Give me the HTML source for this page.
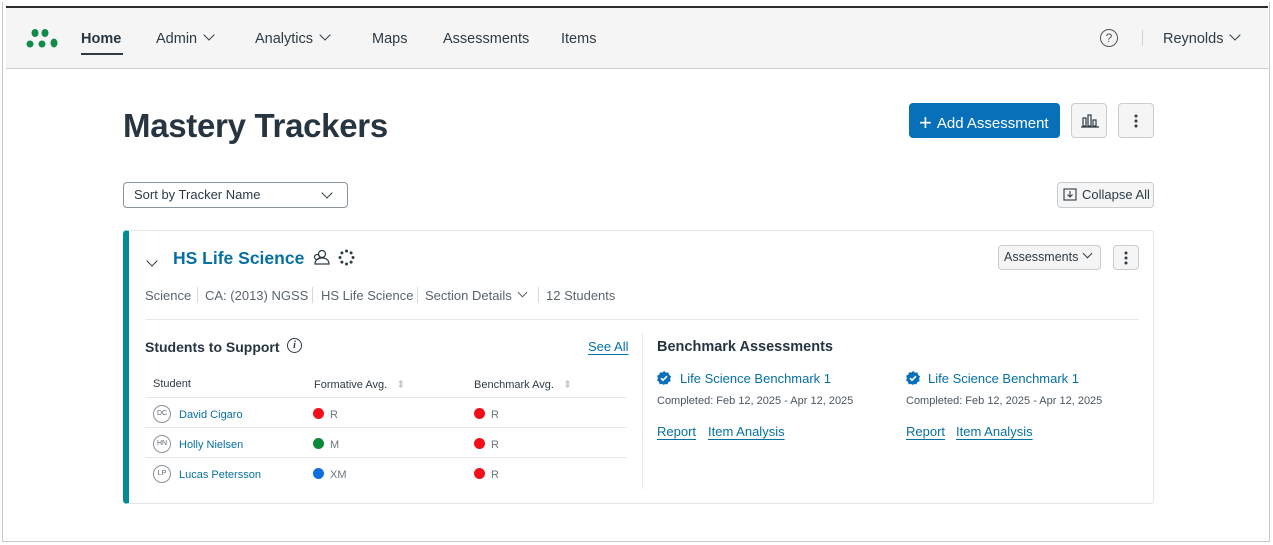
<!DOCTYPE html>
<html><head><meta charset="utf-8"><style>
*{box-sizing:border-box;margin:0;padding:0}
body{width:1273px;height:545px;background:#fff;font-family:"Liberation Sans",sans-serif;color:#273540;position:relative;overflow:hidden}
.frame{position:absolute;left:2px;top:2px;width:1268px;height:540px;border:1px solid #c8c8c8;border-top:none}
.topline{position:absolute;left:6px;top:6px;width:1262px;height:2px;background:#2d2d2d}
.nav{position:absolute;left:6px;top:8px;width:1262px;height:61px;background:#f5f5f5;border-bottom:1px solid #c7cdd1}
.nav span{position:absolute;top:23px;font-size:14.5px;color:#2d3b45}
.abs{position:absolute}
a,.link{color:#0770a3;text-decoration:none}
.chev{display:inline-block;width:8px;height:8px;border-right:1.5px solid #2d3b45;border-bottom:1.5px solid #2d3b45;transform:rotate(45deg);margin-left:8px;position:relative;top:-4px}
.btn{position:absolute;border:1px solid #c7cdd1;background:#f5f5f5;border-radius:4px}
.dots{position:absolute;left:50%;top:50%;transform:translate(-50%,-50%);width:3px}
.dots i{display:block;width:3px;height:3px;border-radius:50%;background:#2d3b45;margin:2px 0}
.meta{position:absolute;top:288px;font-size:13px;color:#5a6470}
.sep{position:absolute;top:287px;width:1px;height:16px;background:#d7dadd}
.th{position:absolute;top:378px;font-size:11px;color:#2d3b45}
.row{position:absolute;left:145px;width:482px;height:1px;background:#e6e8ea}
.av{position:absolute;width:18px;height:18px;border:1px solid #8a949c;border-radius:50%;font-size:7px;text-align:center;line-height:16px;color:#5a6470}
.nm{position:absolute;font-size:11px;color:#0770a3}
.dot{position:absolute;width:11px;height:11px;border-radius:50%}
.gr{position:absolute;font-size:11px;color:#6b7780}
.u{text-decoration:underline;text-underline-offset:3px}
</style></head><body>
<div class="frame"></div>
<div class="topline"></div>
<div class="nav">
 <svg class="abs" style="left:20px;top:20px" width="34" height="22"><g fill="#128a4a"><ellipse cx="9" cy="5" rx="3.5" ry="4"/><ellipse cx="19" cy="5" rx="3.5" ry="4"/><circle cx="4" cy="16" r="3.5"/><circle cx="16" cy="16" r="3.5"/><ellipse cx="28" cy="15" rx="3.5" ry="4.5"/></g></svg>
 <span style="left:75px;font-weight:bold;color:#273540">Home</span>
 <div class="abs" style="left:75px;top:45px;width:42px;height:2px;background:#2d3b45"></div>
 <span style="left:150px">Admin<i class="chev"></i></span>
 <span style="left:249px">Analytics<i class="chev"></i></span>
 <span style="left:366px">Maps</span>
 <span style="left:437px">Assessments</span>
 <span style="left:555px">Items</span>
 <div class="abs" style="left:1094px;top:21px;width:18px;height:18px;border:1.3px solid #555;border-radius:50%;font-size:12px;text-align:center;line-height:16px;color:#555">?</div>
 <div class="abs" style="left:1136px;top:22px;width:1px;height:16px;background:#d0d3d6"></div>
 <span style="left:1157px">Reynolds<i class="chev"></i></span>
</div>
<div class="abs" style="left:123px;top:107px;font-size:33px;font-weight:bold;color:#273540;letter-spacing:-0.3px">Mastery Trackers</div>
<div class="abs" style="left:909px;top:103px;width:151px;height:35px;background:#0770b8;border-radius:4px;color:#fff;font-size:15px;line-height:35px;padding-left:10px"><span style="font-size:22px;position:relative;top:2px;margin-right:5px;font-weight:300">+</span>Add Assessment</div>
<div class="btn" style="left:1071px;top:103px;width:36px;height:35px"><svg class="abs" style="left:9px;top:10px" width="18" height="14" fill="none" stroke="#2d3b45" stroke-width="1.2"><rect x="2" y="4" width="3" height="8"/><rect x="7" y="1" width="3" height="11"/><rect x="12" y="6" width="3" height="6"/><line x1="0" y1="13" x2="18" y2="13"/></svg></div>
<div class="btn" style="left:1118px;top:103px;width:36px;height:35px"><div class="dots"><i></i><i></i><i></i></div></div>
<div class="abs" style="left:123px;top:182px;width:225px;height:26px;border:1px solid #8a949c;border-radius:4px;font-size:13px;line-height:24px;padding-left:10px;color:#2d3b45">Sort by Tracker Name<i class="chev" style="position:absolute;right:16px;top:6px"></i></div>
<div class="btn" style="left:1057px;top:182px;width:97px;height:26px;font-size:13px;line-height:24px;padding-left:24px;color:#2d3b45"><svg class="abs" style="left:5px;top:5px" width="14" height="13" fill="none" stroke="#2d3b45" stroke-width="1.1"><rect x="1" y="1" width="12" height="11"/><path d="M7 3v6M4.5 6.5L7 9l2.5-2.5"/></svg>Collapse All</div>
<!-- card -->
<div class="abs" style="left:123px;top:230px;width:1031px;height:274px;border:1px solid #e3e6e8;border-radius:4px;border-left:6px solid #008a91"></div>
<i class="chev abs" style="left:148px;top:252px;margin:0"></i>
<div class="abs" style="left:173px;top:248px;font-size:17.5px;font-weight:bold;color:#0770a3">HS Life Science</div>
<svg class="abs" style="left:312px;top:249px" width="18" height="17" fill="none" stroke="#2d3b45" stroke-width="1.2"><circle cx="10" cy="5" r="3.5"/><path d="M3 15c0-4 3-6 7-6s7 2 7 6z"/><circle cx="5" cy="8" r="2.5"/></svg>
<svg class="abs" style="left:338px;top:249px" width="17" height="17" fill="#2d3b45"><circle cx="8.5" cy="2" r="1.5"/><circle cx="8.5" cy="15" r="1.5"/><circle cx="2" cy="8.5" r="1.5"/><circle cx="15" cy="8.5" r="1.5"/><circle cx="3.9" cy="3.9" r="1.5"/><circle cx="13.1" cy="13.1" r="1.5"/><circle cx="13.1" cy="3.9" r="1.5"/><circle cx="3.9" cy="13.1" r="1.5"/></svg>
<div class="btn" style="left:998px;top:245px;width:103px;height:25px;font-size:12.5px;line-height:23px;padding-left:5px;color:#2d3b45">Assessments<i class="chev" style="margin-left:6px;width:7px;height:7px"></i></div>
<div class="btn" style="left:1113px;top:245px;width:26px;height:25px"><div class="dots"><i></i><i></i><i></i></div></div>
<div class="meta" style="left:145px">Science</div><div class="sep" style="left:197px"></div>
<div class="meta" style="left:205px">CA: (2013) NGSS</div><div class="sep" style="left:312px"></div>
<div class="meta" style="left:321px">HS Life Science</div><div class="sep" style="left:417px"></div>
<div class="meta" style="left:425px">Section Details<i class="chev" style="border-color:#5a6470;width:7px;height:7px;margin-left:7px"></i></div><div class="sep" style="left:538px"></div>
<div class="meta" style="left:546px">12 Students</div>
<div class="abs" style="left:145px;top:319px;width:994px;height:1px;background:#e6e8ea"></div>
<div class="abs" style="left:642px;top:333px;width:1px;height:156px;background:#e6e8ea"></div>
<div class="abs" style="left:145px;top:339px;font-size:14px;font-weight:bold;color:#273540">Students to Support</div>
<div class="abs" style="left:287px;top:338px;width:15px;height:15px;border:1.2px solid #2d3b45;border-radius:50%;font-size:10px;font-style:italic;font-family:'Liberation Serif',serif;text-align:center;line-height:13px;font-weight:bold">i</div>
<div class="abs link u" style="left:588px;top:339px;font-size:13px">See All</div>
<div class="th" style="left:153px">Student</div>
<div class="th" style="left:314px">Formative Avg. <span style="color:#c7cdd1;margin-left:6px">⬍</span></div>
<div class="th" style="left:474px">Benchmark Avg. <span style="color:#c7cdd1;margin-left:6px">⬍</span></div>
<div class="row" style="top:397px"></div><div class="row" style="top:427px"></div><div class="row" style="top:457px"></div>
<div class="av" style="left:153px;top:405px">DC</div><div class="nm" style="left:179px;top:409px">David Cigaro</div>
<div class="av" style="left:153px;top:435px">HN</div><div class="nm" style="left:179px;top:439px">Holly Nielsen</div>
<div class="av" style="left:153px;top:465px">LP</div><div class="nm" style="left:179px;top:469px">Lucas Petersson</div>
<div class="dot" style="left:313px;top:408px;background:#f20f1a"></div><div class="gr" style="left:330px;top:409px">R</div>
<div class="dot" style="left:313px;top:438px;background:#0b8a3a"></div><div class="gr" style="left:330px;top:439px">M</div>
<div class="dot" style="left:313px;top:468px;background:#0f6fdd"></div><div class="gr" style="left:330px;top:469px">XM</div>
<div class="dot" style="left:474px;top:408px;background:#f20f1a"></div><div class="gr" style="left:491px;top:409px">R</div>
<div class="dot" style="left:474px;top:438px;background:#f20f1a"></div><div class="gr" style="left:491px;top:439px">R</div>
<div class="dot" style="left:474px;top:468px;background:#f20f1a"></div><div class="gr" style="left:491px;top:469px">R</div>
<div class="abs" style="left:657px;top:339px;font-size:14.5px;font-weight:bold;color:#273540">Benchmark Assessments</div>
<svg class="abs" style="left:657px;top:371px" width="14" height="14"><path d="M7 0l2 1.6 2.5-.1.6 2.4 2 1.5-1 2.3.6 2.4-2.3 1-1 2.3L7.9 13 7 14l-1.9-1-2.5.2-.7-2.4L0 9.4l1-2.3L0 4.7l2.2-1L3 1.4l2.5.1z" fill="#0770b8"/><path d="M4 7.2l2 2 4-4" stroke="#fff" stroke-width="1.6" fill="none"/></svg>
<div class="abs link" style="left:680px;top:371px;font-size:13px">Life Science Benchmark 1</div>
<div class="abs" style="left:657px;top:395px;font-size:11px;color:#4a5560">Completed: Feb 12, 2025 - Apr 12, 2025</div>
<div class="abs link u" style="left:657px;top:424px;font-size:13px">Report</div>
<div class="abs link u" style="left:708px;top:424px;font-size:13px">Item Analysis</div>
<svg class="abs" style="left:906px;top:371px" width="14" height="14"><path d="M7 0l2 1.6 2.5-.1.6 2.4 2 1.5-1 2.3.6 2.4-2.3 1-1 2.3L7.9 13 7 14l-1.9-1-2.5.2-.7-2.4L0 9.4l1-2.3L0 4.7l2.2-1L3 1.4l2.5.1z" fill="#0770b8"/><path d="M4 7.2l2 2 4-4" stroke="#fff" stroke-width="1.6" fill="none"/></svg>
<div class="abs link" style="left:928px;top:371px;font-size:13px">Life Science Benchmark 1</div>
<div class="abs" style="left:906px;top:395px;font-size:11px;color:#4a5560">Completed: Feb 12, 2025 - Apr 12, 2025</div>
<div class="abs link u" style="left:906px;top:424px;font-size:13px">Report</div>
<div class="abs link u" style="left:956px;top:424px;font-size:13px">Item Analysis</div>
</body></html>
